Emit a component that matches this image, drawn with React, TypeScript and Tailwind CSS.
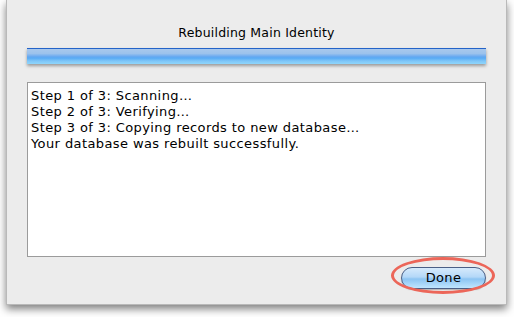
const lines = [
  "Step 1 of 3: Scanning…",
  "Step 2 of 3: Verifying…",
  "Step 3 of 3: Copying records to new database…",
  "Your database was rebuilt successfully.",
];

export default function App() {
  return (
    <div className="w-[514px] h-[317px] bg-white overflow-hidden" style={{ fontFamily: '"DejaVu Sans", "Liberation Sans", sans-serif' }}>
      {/* Dialog sheet */}
      <div className="ml-[6px] w-[501px] h-[305px] bg-[#ececec] border-x border-b border-[#b9b9b9] shadow-[0_4px_8px_rgba(0,0,0,0.5)] flex flex-col px-[20px]">
        <div className="pt-[25px] h-[48px] text-center text-[12.5px] leading-[15px] tracking-[0.2px] text-black">Rebuilding Main Identity</div>

        {/* Progress bar */}
        <div className="h-[16px] border-t border-[#2463c8] bg-[linear-gradient(to_bottom,#a9c8ec_0%,#9cc2ec_30%,#6aaaf0_50%,#58aaf4_60%,#7fc6f8_80%,#8fd6fb_100%)] shadow-[0_2px_3px_rgba(0,0,0,0.35)]" />

        {/* Log */}
        <div className="mt-[18px] h-[175px] bg-white border border-[#9b9b9b] pt-[5px] pl-[3px] text-[13px] leading-[16px] tracking-[0.4px] text-black">
          {lines.map((l) => (
            <div key={l}>{l}</div>
          ))}
        </div>

        <div className="flex justify-end pt-[8px]">
          <div className="relative">
            <button className="w-[85px] h-[22px] rounded-full border border-[#4a5f86] bg-[linear-gradient(to_bottom,#d6eafc_0%,#b4d8f8_45%,#8cc4f2_55%,#bfe6ff_100%)] text-[13px] leading-[20px] tracking-[0.3px] text-black shadow-[0_1px_1px_rgba(0,0,0,0.25)]">
              Done
            </button>
            <div className="absolute left-[-10px] top-[-8px] w-[104px] h-[37px] rounded-[50%] border-[3px] border-[#ec6659]" />
          </div>
        </div>
      </div>
    </div>
  );
}
